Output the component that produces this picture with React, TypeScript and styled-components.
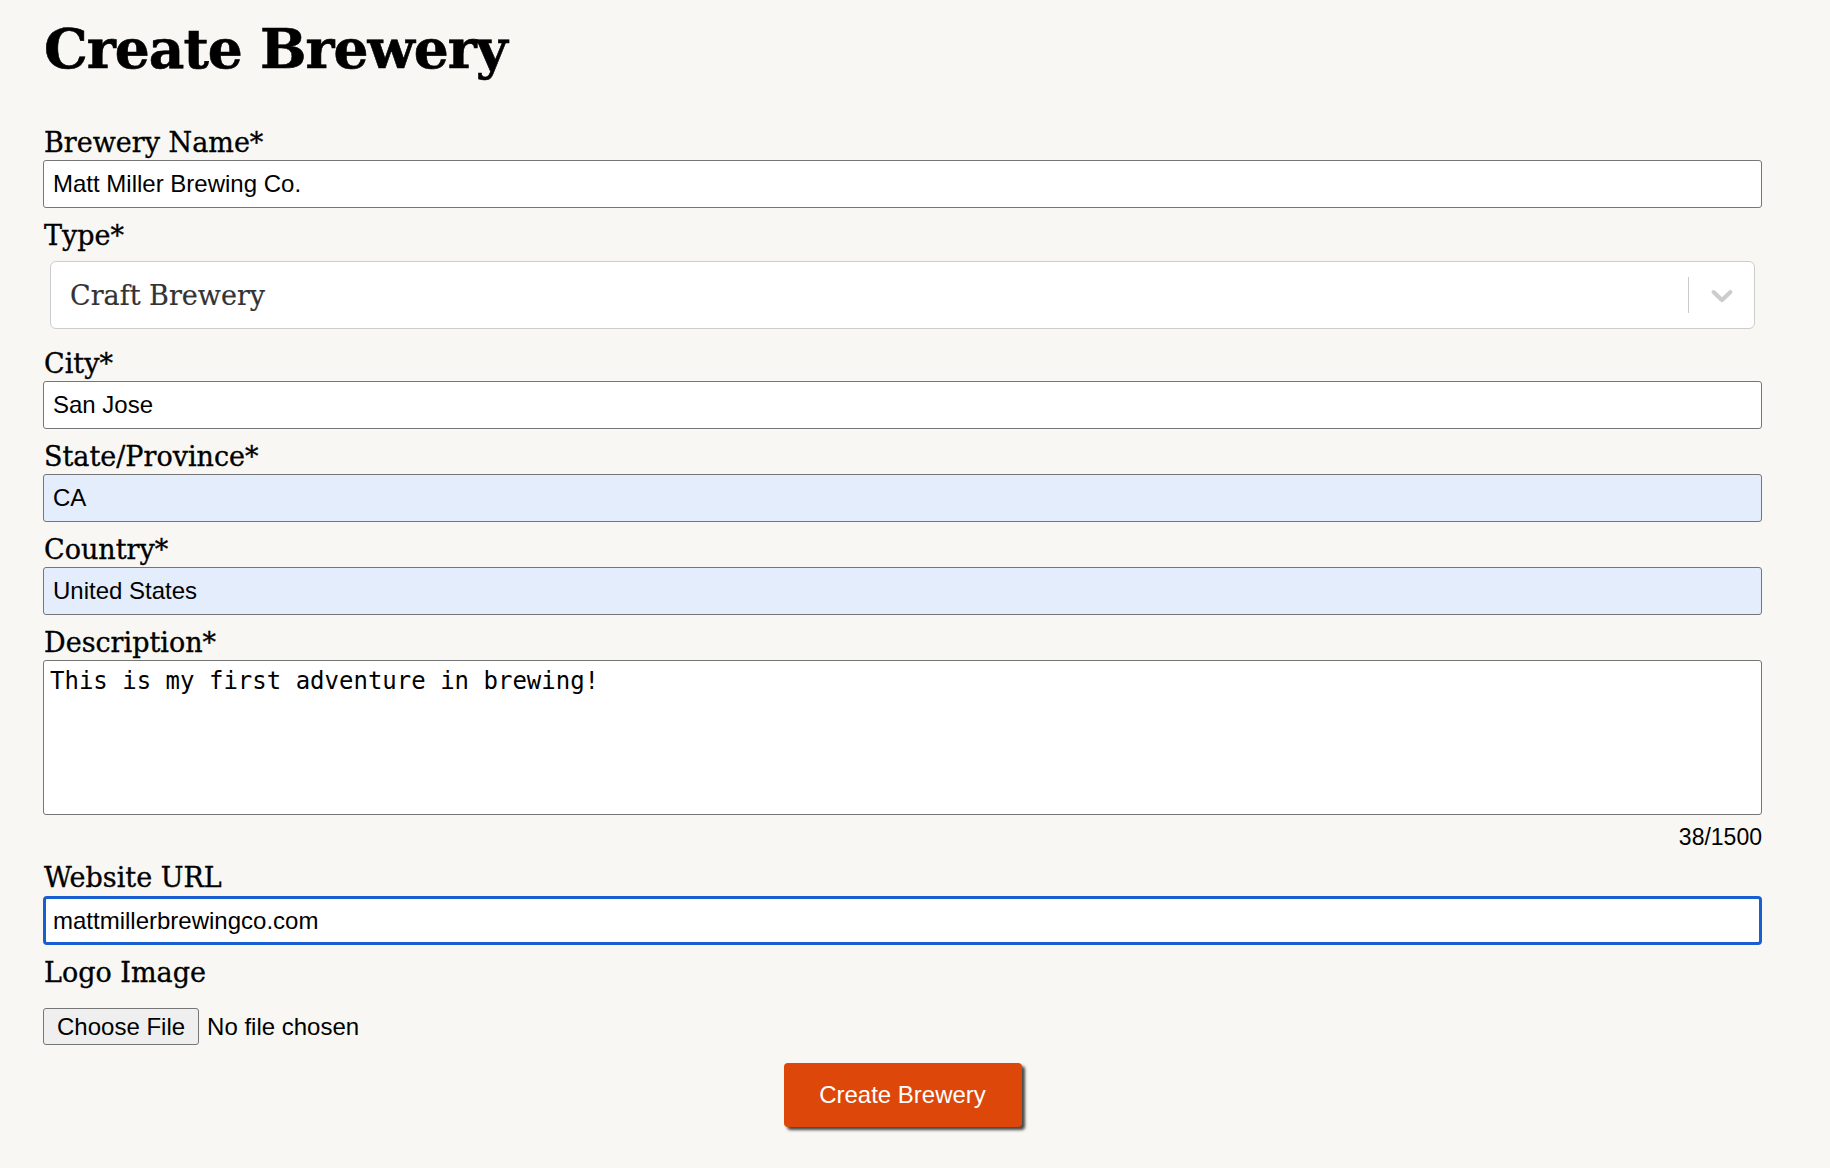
import React from "react";
import styled, { createGlobalStyle } from "styled-components";

const GlobalStyle = createGlobalStyle`
  html, body {
    margin: 0;
    padding: 0;
    background: #f8f7f3;
  }
  body {
    font-family: "DejaVu Serif", serif;
    color: #000;
  }
  * { box-sizing: border-box; }
`;

const Page = styled.main`
  width: 1830px;
  min-height: 1168px;
  padding: 21px 68px 40px 43px;
`;

const Title = styled.h1`
  margin: 0 0 50px 1px;
  font-family: "DejaVu Serif", serif;
  font-weight: 700;
  font-size: 55px;
  line-height: 55px;
  letter-spacing: -1px;
  color: #000;
  -webkit-text-stroke: 0.6px #000;
`;

const Form = styled.form`
  display: flex;
  flex-direction: column;
  width: 1719px;
`;

const Field = styled.div`
  display: flex;
  flex-direction: column;
  margin-bottom: 11px;
`;

const Label = styled.label`
  display: block;
  font-family: "DejaVu Serif", serif;
  font-size: 27px;
  line-height: 34px;
  height: 34px;
  padding-left: 1px;
  color: #000;
  white-space: nowrap;
  -webkit-text-stroke: 0.35px #000;
`;

const TextInput = styled.input<{ $autofilled?: boolean; $focused?: boolean }>`
  display: block;
  width: 100%;
  height: ${(p) => (p.$focused ? "49px" : "48px")};
  margin: ${(p) => (p.$focused ? "1px 0 0" : "0")};
  padding: 0 ${(p) => (p.$focused ? "7px" : "9px")};
  font-family: "Liberation Sans", Arial, sans-serif;
  font-size: 24px;
  color: #000;
  background: ${(p) => (p.$autofilled ? "#e3edfb" : "#fff")};
  border: ${(p) => (p.$focused ? "3px solid #1a5fd0" : "1px solid #767676")};
  border-radius: ${(p) => (p.$focused ? "4px" : "3px")};
  outline: none;
`;

const SelectControl = styled.div`
  display: flex;
  align-items: center;
  height: 68px;
  margin: 8px 7px 7px;
  background: #fff;
  border: 1px solid #cccccc;
  border-radius: 6px;
`;

const SelectValue = styled.div`
  flex: 1;
  padding-left: 19px;
  font-family: "DejaVu Serif", serif;
  font-size: 27px;
  color: #333;
  white-space: nowrap;
  -webkit-text-stroke: 0.2px #333;
`;

const Separator = styled.span`
  width: 1px;
  height: 36px;
  background: #cccccc;
`;

const Indicator = styled.div`
  width: 65px;
  display: flex;
  align-items: center;
  justify-content: center;
  color: #cccccc;
`;

const TextArea = styled.textarea`
  display: block;
  width: 100%;
  height: 155px;
  padding: 6px 6px;
  font-family: "DejaVu Sans Mono", monospace;
  font-size: 24px;
  line-height: 28px;
  color: #000;
  background: #fff;
  border: 1px solid #767676;
  border-radius: 3px;
  resize: none;
  outline: none;
`;

const Counter = styled.div`
  margin-top: 9px;
  text-align: right;
  font-family: "Liberation Sans", Arial, sans-serif;
  font-size: 23px;
  line-height: 26px;
  color: #000;
`;

const FileInput = styled.input`
  display: block;
  margin-top: 18px;
  height: 37px;
  font-family: "Liberation Sans", Arial, sans-serif;
  font-size: 24px;
  color: #000;

  &::file-selector-button {
    height: 37px;
    margin: 0 8px 0 0;
    padding: 0 13px;
    font-family: "Liberation Sans", Arial, sans-serif;
    font-size: 24px;
    color: #000;
    background: #efefef;
    border: 1px solid #767676;
    border-radius: 3px;
  }
`;

const ButtonRow = styled.div`
  display: flex;
  justify-content: center;
  margin-top: 7px;
`;

const SubmitButton = styled.button`
  width: 238px;
  height: 64px;
  font-family: "Liberation Sans", Arial, sans-serif;
  font-size: 24px;
  color: #fff;
  background: #dd4709;
  border: none;
  border-radius: 4px;
  box-shadow: 3px 3px 3px rgba(40, 40, 40, 0.85);
  cursor: pointer;
`;

const Chevron = () => (
  <svg width="36" height="36" viewBox="0 0 20 20" fill="currentColor" aria-hidden="true">
    <path d="M4.516 7.548c0.436-0.446 1.043-0.481 1.576 0l3.908 3.747 3.908-3.747c0.533-0.481 1.141-0.446 1.574 0 0.436 0.445 0.408 1.197 0 1.615-0.406 0.418-4.695 4.502-4.695 4.502-0.217 0.223-0.502 0.335-0.787 0.335s-0.57-0.112-0.789-0.335c0 0-4.287-4.084-4.695-4.502s-0.436-1.170 0-1.615z" />
  </svg>
);

export default function App() {
  const description = "This is my first adventure in brewing!";
  return (
    <>
      <GlobalStyle />
      <Page>
        <Title>Create Brewery</Title>
        <Form onSubmit={(e) => e.preventDefault()}>
          <Field>
            <Label htmlFor="name">Brewery Name*</Label>
            <TextInput id="name" defaultValue="Matt Miller Brewing Co." />
          </Field>
          <Field>
            <Label>Type*</Label>
            <SelectControl>
              <SelectValue>Craft Brewery</SelectValue>
              <Separator />
              <Indicator>
                <Chevron />
              </Indicator>
            </SelectControl>
          </Field>
          <Field>
            <Label htmlFor="city">City*</Label>
            <TextInput id="city" defaultValue="San Jose" />
          </Field>
          <Field>
            <Label htmlFor="state">State/Province*</Label>
            <TextInput id="state" $autofilled defaultValue="CA" />
          </Field>
          <Field>
            <Label htmlFor="country">Country*</Label>
            <TextInput id="country" $autofilled defaultValue="United States" />
          </Field>
          <Field>
            <Label htmlFor="description">Description*</Label>
            <TextArea id="description" defaultValue={description} />
            <Counter>{description.length}/1500</Counter>
          </Field>
          <Field>
            <Label htmlFor="website">Website URL</Label>
            <TextInput id="website" $focused defaultValue="mattmillerbrewingco.com" />
          </Field>
          <Field>
            <Label htmlFor="logo">Logo Image</Label>
            <FileInput id="logo" type="file" />
          </Field>
          <ButtonRow>
            <SubmitButton type="submit">Create Brewery</SubmitButton>
          </ButtonRow>
        </Form>
      </Page>
    </>
  );
}
